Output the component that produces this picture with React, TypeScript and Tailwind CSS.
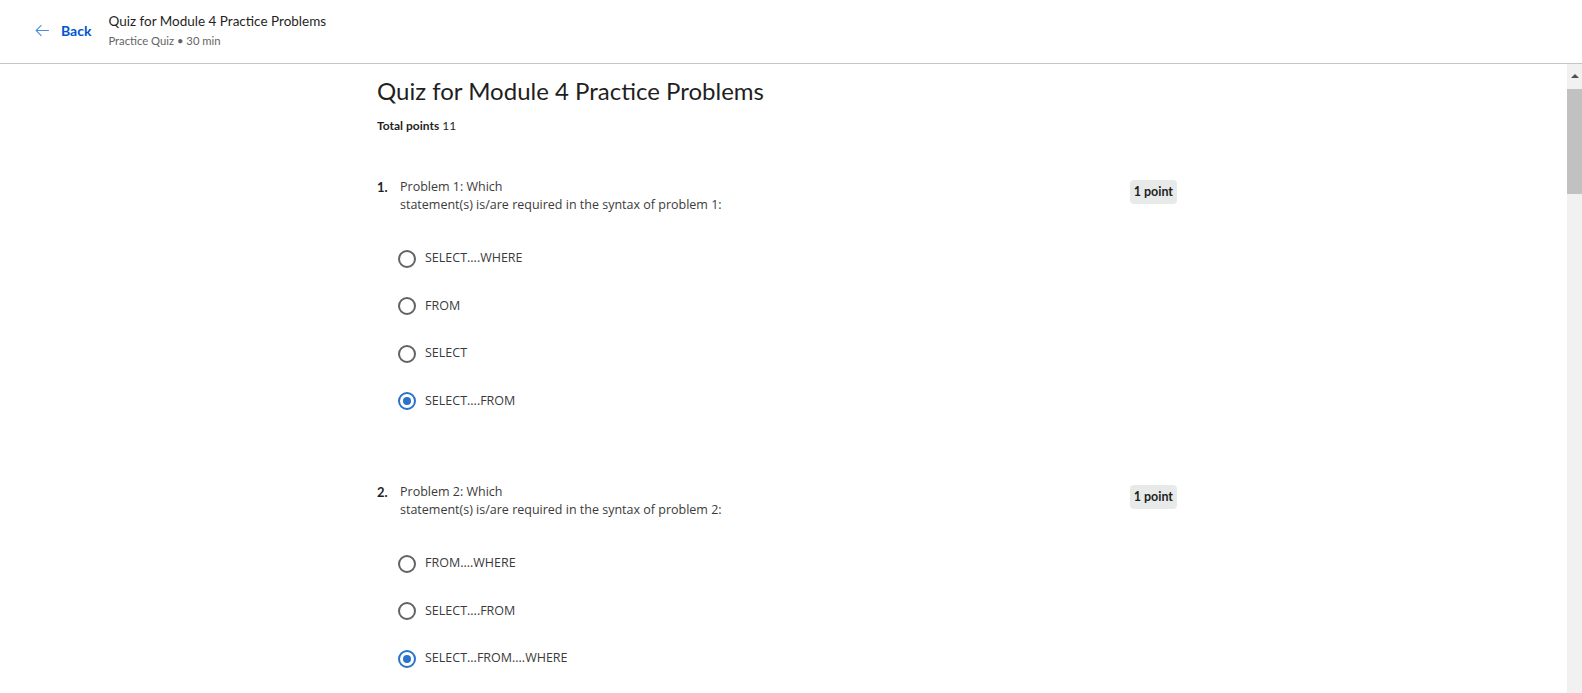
import React from 'react';

const sans = { fontFamily: '"Lato", "Noto Sans", sans-serif' };

type Question = {
  num: number;
  first: string;
  second: string;
  options: string[];
  picked: number;
};

const questions: Question[] = [
  {
    num: 1,
    first: 'Problem 1: Which',
    second: 'statement(s) is/are required in the syntax of problem 1:',
    options: ['SELECT....WHERE', 'FROM', 'SELECT', 'SELECT....FROM'],
    picked: 3,
  },
  {
    num: 2,
    first: 'Problem 2: Which',
    second: 'statement(s) is/are required in the syntax of problem 2:',
    options: ['FROM....WHERE', 'SELECT....FROM', 'SELECT...FROM....WHERE'],
    picked: 2,
  },
];

function Radio({ checked }: { checked: boolean }) {
  if (checked) {
    return (
      <span className="flex h-[18px] w-[18px] items-center justify-center rounded-full border-2 border-[#2a73cc]">
        <span className="h-[8px] w-[8px] rounded-full bg-[#2a73cc]" />
      </span>
    );
  }
  return <span className="h-[18px] w-[18px] rounded-full border-2 border-[#636363]" />;
}

function QuestionBlock({ q, top }: { q: Question; top: string }) {
  return (
    <div className={top}>
      <div className="flex items-start justify-between">
        <div className="flex items-start">
          <span className="w-[23px] text-[13px] font-bold leading-[18px] text-[#1f1f1f]" style={sans}>
            {q.num}.
          </span>
          <div className="text-[12.5px] leading-[18px] text-[#3b3b3b]" style={{ fontFamily: '"Open Sans", sans-serif' }}>
            <div>{q.first}</div>
            <div>{q.second}</div>
          </div>
        </div>
        <span
          className="mt-[2px] flex h-[24px] items-center rounded-[4px] bg-[#e8e9e9] px-[4px] text-[12.5px] font-bold text-[#1f1f1f]"
          style={sans}
        >
          1 point
        </span>
      </div>
      <div className="mt-[21px] flex flex-col pl-[21px]">
        {q.options.map((opt, i) => (
          <label key={i} className="flex h-[47.5px] items-center gap-[9px]">
            <Radio checked={i === q.picked} />
            <span className="text-[12.5px] text-[#3b3b3b]" style={{ fontFamily: '"Open Sans", sans-serif' }}>
              {opt}
            </span>
          </label>
        ))}
      </div>
    </div>
  );
}

export default function App() {
  return (
    <div className="h-[693px] overflow-hidden bg-white">
      <header className="flex h-[64px] items-center border-b border-[#c4c4c4] pb-[1px]" style={sans}>
        <button className="ml-[34px] mt-[-2px] flex items-center gap-[10px] text-[14px] font-bold text-[#0056d2]">
          <svg width="17" height="17" viewBox="0 0 24 24" fill="none" stroke="#4a8be0" strokeWidth="1.5">
            <path d="M21 12H3.5M10.5 4.5 3 12l7.5 7.5" />
          </svg>
          Back
        </button>
        <div className="ml-[17px] flex flex-col">
          <span className="text-[13.5px] leading-[20px] text-[#1f1f1f]">Quiz for Module 4 Practice Problems</span>
          <span className="text-[11.25px] leading-[20px] text-[#636363]">Practice Quiz • 30 min</span>
        </div>
      </header>
      <div className="flex h-[629px]">
        <main className="flex-1 overflow-hidden">
          <div className="ml-[377px] w-[800px] pt-[11px]">
            <h1 className="text-[24px] leading-[32px] text-[#1f1f1f]" style={sans}>
              Quiz for Module 4 Practice Problems
            </h1>
            <p className="mt-[11px] text-[12px] leading-[16px] text-[#1f1f1f]" style={sans}>
              <span className="font-bold">Total points</span> 11
            </p>
            <QuestionBlock q={questions[0]} top="mt-[44px]" />
            <QuestionBlock q={questions[1]} top="mt-[58px]" />
          </div>
        </main>
        <div className="flex w-[15px] flex-col items-center bg-[#f1f1f1]">
          <div className="mt-[10px] h-0 w-0 border-x-[4px] border-b-[4px] border-x-transparent border-b-[#505050]" />
          <div className="mt-[11px] h-[105px] w-full bg-[#c1c1c1]" />
        </div>
      </div>
    </div>
  );
}
